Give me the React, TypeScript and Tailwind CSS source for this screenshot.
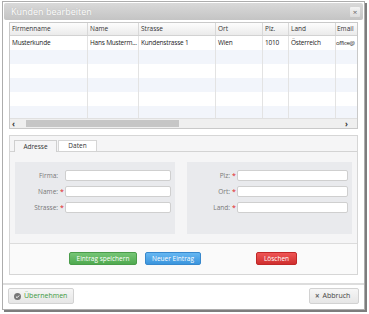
import React from 'react';

const columns = [
  { title: 'Firmenname', w: 78, value: 'Musterkunde' },
  { title: 'Name', w: 51, value: 'Hans Musterm...' },
  { title: 'Strasse', w: 77, value: 'Kundenstrasse 1' },
  { title: 'Ort', w: 47, value: 'Wien' },
  { title: 'Plz.', w: 26, value: '1010' },
  { title: 'Land', w: 47, value: 'Österreich' },
  { title: 'Email', w: 21, value: 'office@' },
];

const leftFields = [
  { label: 'Firma:', required: false },
  { label: 'Name:', required: true },
  { label: 'Strasse:', required: true },
];

const rightFields = [
  { label: 'Plz:', required: true },
  { label: 'Ort:', required: true },
  { label: 'Land:', required: true },
];

function FieldSet({ fields, width }: { fields: { label: string; required: boolean }[]; width: string }) {
  return (
    <div className={`${width} h-[72px] bg-[#e9eaed] pt-[8px]`}>
      <div className="flex flex-col gap-[5px]">
        {fields.map((f) => (
          <div key={f.label} className="flex h-[11px] items-center">
            <span className="w-[44px] pr-[1px] text-right text-[6.5px] text-[#777]">{f.label}</span>
            <span className="w-[6px] text-center text-[7px] leading-none text-[#e02020]">{f.required ? '*' : ''}</span>
            <div className="mr-[4px] h-[11px] flex-1 rounded-[2px] border border-[#cfcfcf] bg-white" />
          </div>
        ))}
      </div>
    </div>
  );
}

export default function App() {
  const rows = [0, 1, 2, 3, 4, 5];
  return (
    <div className="relative h-[314px] w-[369px] bg-white" style={{ fontFamily: '"Open Sans", "DejaVu Sans", sans-serif' }}>
      <div className="ml-[2px] mt-[1px] flex h-[309px] w-[363px] flex-col border border-[#adadad] bg-white shadow-[2px_2px_0_#7d7d7d]">
        {/* title bar */}
        <div className="mx-[1px] mt-[1px] flex h-[17px] items-center justify-between rounded-[2px] bg-gradient-to-b from-[#d9d9d9] to-[#c4c4c4] pl-[7px] pr-[3px]">
          <span className="text-[9px] text-white [text-shadow:0_0_1px_#aaa]">Kunden bearbeiten</span>
          <div className="flex h-[10px] w-[10px] items-center justify-center rounded-[1px] bg-gradient-to-b from-[#f3f3f3] to-[#dcdcdc] text-[8px] leading-none text-[#666]">×</div>
        </div>

        {/* grid */}
        <div className="mx-[6px] mt-[2px] flex h-[107px] flex-col overflow-hidden border border-[#c9c9c9] bg-white">
          <div className="flex h-[95px] flex-col overflow-hidden">
            <div className="flex h-[13px] shrink-0 border-b border-[#d2d2d2] bg-gradient-to-b from-[#fdfdfd] to-[#ebebeb]">
              {columns.map((c) => (
                <div key={c.title} style={{ width: c.w }} className="flex shrink-0 items-center border-r border-[#d8d8d8] pl-[2px] text-[6.5px] text-[#333] last:border-r-0 last:pl-[1px]">
                  {c.title}
                </div>
              ))}
            </div>
            {rows.map((r) => (
              <div key={r} className={`flex h-[14px] shrink-0 ${r % 2 === 1 ? 'bg-[#f2f5fb]' : 'bg-white'}`}>
                {columns.map((c) => (
                  <div key={c.title} style={{ width: c.w }} className="flex shrink-0 items-center whitespace-nowrap border-r border-[#e3e3e3] pl-[2px] text-[6.5px] tracking-[-0.2px] text-[#222] last:border-r-0 last:pl-0 last:text-[6px] last:tracking-[-0.3px]">
                    {r === 0 ? c.value : ''}
                  </div>
                ))}
              </div>
            ))}
          </div>
          <div className="flex h-[10px] items-center border-t border-[#e0e0e0] bg-[#efefef] px-[2px]">
            <span className="w-[14px] text-[8px] font-bold leading-none text-[#333]">‹</span>
            <div className="h-[7px] w-[153px] bg-[#c6c6c6]" />
            <div className="flex-1" />
            <span className="w-[10px] text-[8px] font-bold leading-none text-[#333]">›</span>
          </div>
        </div>

        {/* tab panel */}
        <div className="mx-[6px] mt-[6px] flex h-[140px] flex-col border border-[#d6d6d6] bg-[#f5f5f6]">
          <div className="flex h-[16px] items-end gap-[1px] border-b border-[#d3d3d3] pl-[4px]">
            <div className="-mb-px flex h-[12px] w-[43px] items-center justify-center border border-b-0 border-[#cfcfcf] bg-[#f5f5f6] text-[6.5px] text-[#333]">Adresse</div>
            <div className="flex h-[11px] w-[39px] items-center justify-center border border-b-0 border-[#d6d6d6] bg-white text-[6.5px] text-[#333]">Daten</div>
          </div>
          <div className="flex h-[92px] gap-[12px] border-b border-[#dcdcdc] px-[5px] pt-[10px]">
            <FieldSet fields={leftFields} width="w-[160px]" />
            <FieldSet fields={rightFields} width="w-[165px]" />
          </div>
          <div className="flex flex-1 items-center bg-[#fafafa] pb-[1px]">
            <div className="ml-[59px] flex h-[13px] w-[68px] items-center justify-center rounded-[2px] border border-[#4a9c4a] bg-gradient-to-b from-[#76c676] to-[#4fa94f] text-[6.5px] text-white">Eintrag speichern</div>
            <div className="ml-[8px] flex h-[13px] w-[56px] items-center justify-center rounded-[2px] border border-[#3888cc] bg-gradient-to-b from-[#66b7f2] to-[#3a95dd] text-[6.5px] text-white">Neuer Eintrag</div>
            <div className="ml-[55px] flex h-[13px] w-[41px] items-center justify-center rounded-[2px] border border-[#c02828] bg-gradient-to-b from-[#ef5555] to-[#cf2e2e] text-[6.5px] text-white">Löschen</div>
          </div>
        </div>

        {/* footer */}
        <div className="mt-[8px] h-[2px] bg-[#dddddd]" />
        <div className="flex items-center justify-between px-[5px] pt-[3px]">
          <div className="flex h-[16px] w-[66px] items-center gap-[3px] rounded-[2px] border border-[#d2d2d2] bg-gradient-to-b from-[#f6f6f6] to-[#e6e6e6] pl-[5px]">
            <svg width="7" height="7" viewBox="0 0 10 10">
              <circle cx="5" cy="5" r="5" fill="#777" />
              <path d="M2.8 5.2 L4.4 6.7 L7.3 3.6" stroke="#fff" strokeWidth="1.4" fill="none" />
            </svg>
            <span className="text-[7px] text-[#3d9a3d]">Übernehmen</span>
          </div>
          <div className="flex h-[16px] w-[50px] items-center gap-[3px] rounded-[2px] border border-[#d2d2d2] bg-gradient-to-b from-[#f6f6f6] to-[#e6e6e6] pl-[5px]">
            <span className="text-[8px] font-bold leading-none text-[#666]">×</span>
            <span className="text-[7px] text-[#444]">Abbruch</span>
          </div>
        </div>
      </div>
    </div>
  );
}
